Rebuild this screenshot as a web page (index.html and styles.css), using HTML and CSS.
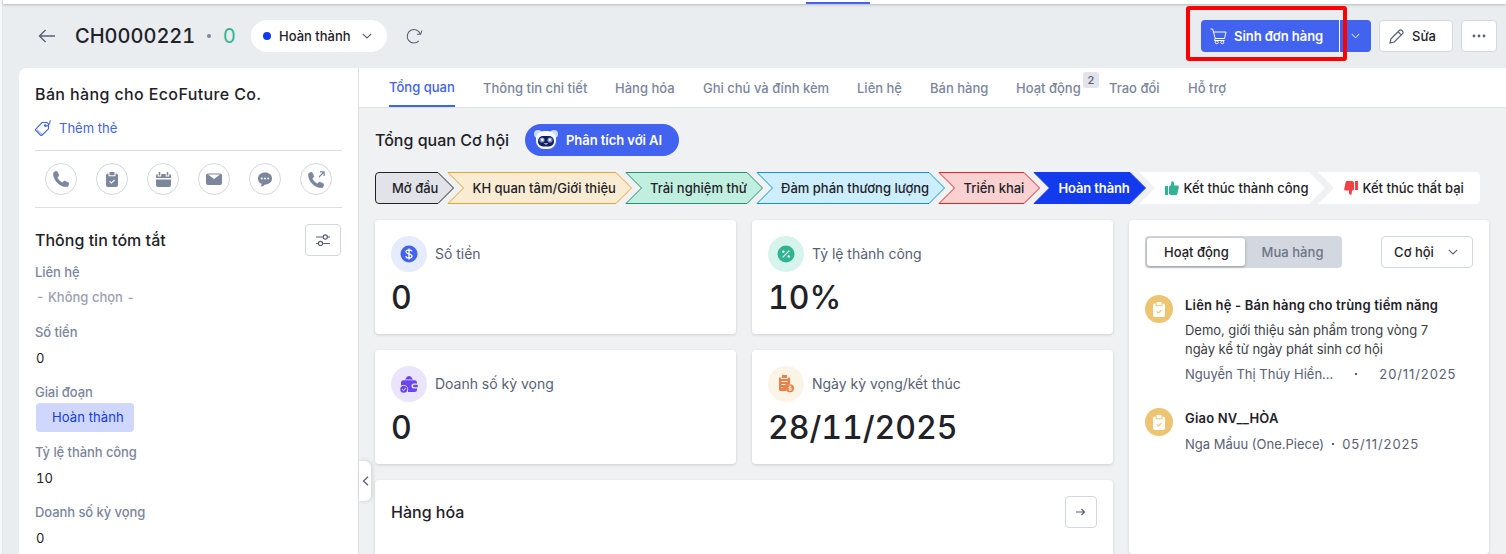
FILE: index.html
```html
<!DOCTYPE html>
<html lang="vi">
<head>
<meta charset="utf-8">
<title>CH0000221</title>
<link rel="stylesheet" href="styles.css">
</head>
<body>
<svg class="defs" aria-hidden="true">
  <symbol id="chev" viewBox="0 0 10 6"><path d="M.8.8 5 5 9.2.8" fill="none" stroke="currentColor" stroke-width="1.1"/></symbol>
  <symbol id="phone" viewBox="0 0 16 16"><path d="M1.2 1.2 3 .3c.6-.2 1.200 0 1.400.6l1.300 3c.2.5.1 1-.3 1.400L4.200 6.400c.8 2.200 3.200 4.600 5.400 5.400l1.100-1.300c.4-.4.900-.5 1.400-.3l3 1.300c.6.2.8.8.7 1.300l-.8 2.200c-.2.5-.6.8-1.100.8C6.700 15.800.4 9.500.4 2.300c0-.5.3-.9.8-1.100z" fill="currentColor" stroke="currentColor" stroke-width=".6"/></symbol>
  <symbol id="clip" viewBox="0 0 12 15"><path d="M2 1.500h.5v2.700h7V1.500h.5a2 2 0 0 1 2 2V13a2 2 0 0 1-2 2H2a2 2 0 0 1-2-2V3.500a2 2 0 0 1 2-2zM3.500 0h5v3.200h-5z" fill="currentColor"/><path class="tick" d="m3.600 9.300 1.800 1.700 3.200-3.200" fill="none" stroke-width="1.100"/></symbol>
</svg>
<div class="app">
  <div class="topbar"><span class="topbar-active"></span></div>
  <header class="head">
    <svg class="back" width="18" height="14" viewBox="0 0 18 14"><path d="M17 7H1.500M7.500 1l-6 6 6 6" fill="none" stroke="#586074" stroke-width="1.400"/></svg>
    <h1 class="code">CH0000221</h1>
    <i class="sep"></i>
    <span class="zero">0</span>
    <div class="status"><i class="status-dot"></i><span>Hoàn thành</span><svg width="10" height="6"><use href="#chev"/></svg></div>
    <svg class="reload" width="17" height="16" viewBox="0 0 17 16"><path d="M12.800 12.900A6.700 6.700 0 1 1 14.300 6.200M10.900 6.200h3.700l1.300-3.600" fill="none" stroke="#586074" stroke-width="1.100"/></svg>
    <div class="actions">
      <div class="split">
        <div class="split-main"><svg width="17" height="17" viewBox="0 0 17 17" fill="none" stroke="#fff"><path d="M.5 1h2.200l2.500 9.500h9.300L16 4H3.600M5.200 10.500 4.500 12.500h10"/><circle cx="6.700" cy="14.300" r="1.500"/><circle cx="12.300" cy="14.300" r="1.500"/></svg><span>Sinh đơn hàng</span></div>
        <div class="split-more"><svg width="9" height="6"><use href="#chev"/></svg></div>
        <span class="callout"></span>
      </div>
      <div class="btn edit"><svg width="15" height="15" viewBox="0 0 15 15" fill="none" stroke="#586074" stroke-width="1.200"><path d="M1 14l1-4.300 8.300-8.200a1.800 1.800 0 0 1 2.600 0l.6.6a1.800 1.800 0 0 1 0 2.600L5.300 13z M9.300 3l2.900 2.900"/></svg><span>Sửa</span></div>
      <div class="btn dots"><svg width="14" height="4" fill="#586074"><circle cx="2" cy="2" r="1.400"/><circle cx="7" cy="2" r="1.400"/><circle cx="12" cy="2" r="1.400"/></svg></div>
    </div>
  </header>
  <div class="main">
    <aside class="side">
      <h2 class="deal">Bán hàng cho EcoFuture Co.</h2>
      <div class="tagline"><svg width="16" height="16" viewBox="0 0 16 16" fill="none" stroke="#4262f0" stroke-width="1.100"><path d="M7 2.500h5l1.500 1.400v4.900L7.200 15c-.6.500-1.200.500-1.800 0L1 10.700c-.6-.6-.6-1.200 0-1.800zM10.200 5.700c2.300 1 5-.7 5-5.500"/><path d="M2 9.700l5 4.600" stroke-width=".7"/><circle cx="10.300" cy="5.600" r=".8"/></svg><span>Thêm thẻ</span></div>
      <div class="quick">
        <span><svg width="16" height="16"><use href="#phone"/></svg></span>
        <span><svg width="12" height="15"><use href="#clip"/></svg></span>
        <span><svg width="15" height="15" viewBox="0 0 15 15" fill="currentColor"><path d="M2.700 0h1.600v3.500H2.700zM10.700 0h1.600v3.500h-1.600zM0 6V4a2 2 0 0 1 1.700-2v2.500h3.600V2h4.400v2.500h3.600V2A2 2 0 0 1 15 4v2zM0 7.500h15V13a2 2 0 0 1-2 2H2a2 2 0 0 1-2-2z"/></svg></span>
        <span><svg width="16" height="12" viewBox="0 0 16 12"><rect y=".5" width="16" height="11.500" rx="2" fill="currentColor"/><path d="M2 1.500h12L8 6z" fill="#fff"/></svg></span>
        <span><svg width="14" height="15" viewBox="0 0 14 15"><path d="M7 .5c4 0 7 2.500 7 6s-3 6-7 6c-.7 1-2.200 2-4.500 2 .9-.7 1.100-1.700 1-2.700C1.300 10.800 0 8.900 0 6.500c0-3.500 3-6 7-6z" fill="currentColor"/><g fill="#fff"><circle cx="3.800" cy="6.500" r="1"/><circle cx="7" cy="6.500" r="1"/><circle cx="10.200" cy="6.500" r="1"/></g></svg></span>
        <span><svg width="17" height="17" viewBox="0 0 17 17"><use href="#phone" x="0" y="1" width="16" height="16"/><path d="M11 6l5-5M12 .9h4.100V5" fill="none" stroke="currentColor" stroke-width="1.200"/></svg></span>
      </div>
      <div class="sumhead"><h3>Thông tin tóm tắt</h3><div class="btn filter"><svg width="14" height="12" viewBox="0 0 14 12" fill="none" stroke="#586074" stroke-width="1.200"><path d="M0 3h7M11.500 3H14M0 9.500h2.300M6.800 9.500H14"/><circle cx="9.300" cy="3" r="2.100"/><circle cx="4.500" cy="9.500" r="2.100"/></svg></div></div>
      <dl class="facts">
        <dt>Liên hệ</dt><dd class="none">- Không chọn -</dd>
        <dt>Số tiền</dt><dd>0</dd>
        <dt>Giai đoạn</dt><dd class="withtag"><span class="stage-tag">Hoàn thành</span></dd>
        <dt>Tỷ lệ thành công</dt><dd>10</dd>
        <dt>Doanh số kỳ vọng</dt><dd>0</dd>
      </dl>
    </aside>
    <section class="content">
      <nav class="tabs">
        <span class="on">Tổng quan</span><span>Thông tin chi tiết</span><span>Hàng hóa</span><span>Ghi chú và đính kèm</span><span>Liên hệ</span><span>Bán hàng</span><span class="hasbadge">Hoạt động<b class="badge">2</b></span><span>Trao đổi</span><span>Hỗ trợ</span>
      </nav>
      <div class="body">
        <div class="collapse"><svg width="7" height="10" viewBox="0 0 7 10"><path d="M6 .7 1.500 5 6 9.300" fill="none" stroke="#586074" stroke-width="1.300"/></svg></div>
        <div class="titlebar"><h2>Tổng quan Cơ hội</h2>
          <div class="ai"><svg width="24" height="20" viewBox="0 0 24 20"><circle cx="4" cy="4" r="4" fill="#c9dbff"/><circle cx="20" cy="4" r="4" fill="#c9dbff"/><rect x="2" y="1" width="20" height="18" rx="8" fill="#f5f9ff"/><rect x="4" y="6" width="16" height="10.500" rx="5" fill="#102066"/><circle cx="8" cy="10" r="2.600" fill="#7f91c8"/><circle cx="16" cy="10" r="2.600" fill="#7f91c8"/><circle cx="8.300" cy="9.800" r="1.300" fill="#fff"/><circle cx="15.700" cy="9.800" r="1.300" fill="#fff"/><path d="M10.500 13.500q1.500 1.200 3 0" stroke="#fff" fill="none"/></svg><span>Phân tích với AI</span></div>
        </div>
        <div class="stages">
          <div class="stage s1"><svg viewBox="0 0 79 32"><path d="M4 .5H63L78.500 16 63 31.500H4A3.500 3.500 0 0 1 .5 28V4A3.500 3.500 0 0 1 4 .5z"/></svg><span>Mở đầu</span></div>
          <div class="stage s2"><svg viewBox="0 0 185 32"><path d="M1 .5H169L184.500 16 169 31.500H1L16.500 16z"/></svg><span>KH quan tâm/Giới thiệu</span></div>
          <div class="stage s3"><svg viewBox="0 0 138 32"><path d="M1 .5H122L137.500 16 122 31.500H1L16.500 16z"/></svg><span>Trải nghiệm thử</span></div>
          <div class="stage s4"><svg viewBox="0 0 189 32"><path d="M1 .5H173L188.500 16 173 31.500H1L16.500 16z"/></svg><span>Đàm phán thương lượng</span></div>
          <div class="stage s5"><svg viewBox="0 0 102 32"><path d="M1 .5H86L101.500 16 86 31.500H1L16.500 16z"/></svg><span>Triển khai</span></div>
          <div class="stage s6"><svg viewBox="0 0 113 32"><path d="M1 .5H97L112.500 16 97 31.500H1L16.500 16z"/></svg><span>Hoàn thành</span></div>
          <div class="stage s7"><svg viewBox="0 0 186 32"><path d="M0 0H170L186 16 170 32H0L16 16z"/></svg><svg class="thumb up" viewBox="0 0 14 14"><path d="M0 5h3v9H0zM4 5.500 6 4l.5-3.500C7.500-.3 9 .5 9 2v2.500h3.500c1 0 1.500.8 1.300 1.600l-1.400 6.600c-.2.800-.7 1.300-1.500 1.300H6l-2-1z"/></svg><span>Kết thúc thành công</span></div>
          <div class="stage s8"><svg viewBox="0 0 162 32"><path d="M0 0H158a4 4 0 0 1 4 4V28a4 4 0 0 1-4 4H0L16 16z"/></svg><svg class="thumb down" viewBox="0 0 14 14"><path transform="rotate(180 7 7)" d="M0 5h3v9H0zM4 5.500 6 4l.5-3.500C7.500-.3 9 .5 9 2v2.500h3.500c1 0 1.500.8 1.300 1.600l-1.400 6.600c-.2.800-.7 1.300-1.500 1.300H6l-2-1z"/></svg><span>Kết thúc thất bại</span></div>
        </div>
        <div class="panels">
          <div class="cards">
            <div class="card"><div class="ct"><span class="ic blue"><svg width="18" height="18" viewBox="0 0 18 18"><circle cx="9" cy="9" r="8.500" fill="#4262f0"/><path d="M12 6.400C11.600 5.200 10.500 4.800 9 4.800c-1.800 0-3 .7-3 2C6 9.500 12 8.200 12 11.100c0 1.400-1.300 2.100-3 2.100s-2.900-.7-3.200-2M9 3.500v11" fill="none" stroke="#fff" stroke-width="1.300"/></svg></span><span>Số tiền</span></div><div class="num">0</div></div>
            <div class="card"><div class="ct"><span class="ic green"><svg width="18" height="18" viewBox="0 0 18 18"><circle cx="9" cy="9" r="8.500" fill="#2eb491"/><path d="M12.300 5.700l-6.600 6.600" stroke="#fff" stroke-width="1.200"/><circle cx="6.300" cy="6.600" r="1.200" fill="#fff"/><circle cx="11.700" cy="11.400" r="1.200" fill="#fff"/></svg></span><span>Tỷ lệ thành công</span></div><div class="num">10%</div></div>
            <div class="card"><div class="ct"><span class="ic violet"><svg width="18" height="18" viewBox="0 0 18 18"><path d="M5 4.500 7 1.700Q9 .2 11 1.700l2 2.800z" fill="#6b45ee"/><path d="M3.500 5.200h11A2.500 2.500 0 0 1 17 7.500v7a2.500 2.500 0 0 1-2.500 2.500H8V14L4 10.500H1v-3a2.500 2.500 0 0 1 2.500-2.300z" fill="#6b45ee"/><rect x="11.500" y="8.500" width="7" height="5" rx="2.500" fill="#eae5fd"/><rect x="13" y="9.700" width="5" height="2.600" rx="1.300" fill="#6b45ee"/><circle cx="3.800" cy="14.200" r="4.300" fill="#eae5fd"/><circle cx="3.800" cy="14.200" r="3.500" fill="#6b45ee"/><path d="m2.200 14.200 1.300 1.300 2.200-2.300" stroke="#fff" fill="none"/></svg></span><span>Doanh số kỳ vọng</span></div><div class="num">0</div></div>
            <div class="card"><div class="ct"><span class="ic orange"><svg width="18" height="18" viewBox="0 0 18 18"><path d="M2 2.500h2V4h7V2.500h2V9c-3 .5-4.500 3-3.500 7H3.500A1.500 1.500 0 0 1 2 14.500zM5 0h5v3H5z" fill="#ed8044"/><path d="M4.500 6.500h6M4.500 9.500h4M4.500 12.500h1" stroke="#fff" stroke-width="1.200"/><circle cx="13" cy="13.300" r="4" fill="#ed8044"/><path d="M14.500 12c-.6-.9-2.800-.7-2.800.3 0 1.200 2.900.6 2.900 1.900 0 1-2.400 1.200-3 .2M13 10.500v5.500" stroke="#fff" stroke-width=".8" fill="none"/></svg></span><span>Ngày kỳ vọng/kết thúc</span></div><div class="num">28/11/2025</div></div>
            <div class="card goods"><h3>Hàng hóa</h3><div class="btn go"><svg width="10" height="8" viewBox="0 0 10 8"><path d="M0 4h8.500M5.500 1l3 3-3 3" fill="none" stroke="#586074" stroke-width="1.200"/></svg></div></div>
          </div>
          <div class="activity">
            <div class="acthead"><div class="toggle"><span class="sel">Hoạt động</span><span>Mua hàng</span></div><div class="btn pick"><span>Cơ hội</span><svg width="10" height="6"><use href="#chev"/></svg></div></div>
            <div class="act"><span class="aic"><svg width="12" height="15"><use href="#clip"/></svg></span><div><h4>Liên hệ - Bán hàng cho trùng tiềm năng</h4><p>Demo, giới thiệu sản phẩm trong vòng 7<br>ngày kể từ ngày phát sinh cơ hội</p><div class="meta wide"><span>Nguyễn Thị Thúy Hiền...</span><i></i><span class="date">20/11/2025</span></div></div></div>
            <div class="act second"><span class="aic"><svg width="12" height="15"><use href="#clip"/></svg></span><div><h4>Giao NV__HÒA</h4><div class="meta"><span>Nga Mẩuu (One.Piece)</span><i></i><span class="date">05/11/2025</span></div></div></div>
          </div>
        </div>
      </div>
    </section>
  </div>
</div>
</body>
</html>
```
FILE: styles.css
```css
* { box-sizing: border-box; }
body { margin: 0; width: 1506px; height: 554px; overflow: hidden; background: #f7f8f9; font: 13px/20px Inter, sans-serif; color: #1f2229; }
h1, h2, h3, h4, p, dl, dd { margin: 0; font-weight: 500; }
svg { display: block; flex: none; }
.defs { position: absolute; width: 0; height: 0; }
.app { margin-left: 2px; border-left: 1px solid #dfe2e6; height: 554px; background: #e9edf0; display: flex; flex-direction: column; }
.topbar { height: 4px; flex: none; background: #fff; box-shadow: 0 1px 3px rgba(0,0,0,.22); padding: 2px 0 0 803px; }
.topbar-active { display: block; width: 64px; height: 2px; background: #4262f0; }
.head { height: 64px; flex: none; display: flex; align-items: center; padding: 0 9px 0 35px; }
.code { font-size: 20px; letter-spacing: 0; margin-left: 19px; width: 132px; font-variant-numeric: tabular-nums; }
.sep { width: 4px; height: 4px; border-radius: 50%; background: #7c869c; }
.zero { color: #2eb491; font-size: 20px; width: 27px; margin-left: 12px; margin-right: 1px; }
.status { width: 136px; height: 32px; border-radius: 16px; background: #fff; display: flex; align-items: center; padding: 0 15px 0 12px; font-weight: 500; color: #1f2229; }
.status-dot { width: 8px; height: 8px; border-radius: 50%; background: #133aec; margin-right: 8px; }
.status svg { margin-left: auto; color: #586074; }
.reload { margin-left: 19px; }
.actions { margin-left: auto; display: flex; gap: 8px; }
.btn { border: 1px solid #d3d7df; border-radius: 4px; background: #fff; display: flex; align-items: center; justify-content: center; height: 32px; font-weight: 500; color: #1f2229; }
.split { position: relative; display: flex; width: 170px; height: 32px; background: #4262f0; border-radius: 4px; color: #fff; font-weight: 600; letter-spacing: -.05px; }
.split-main { width: 139px; border-right: 1px solid #fff; display: flex; align-items: center; padding-left: 9px; gap: 7px; }
.split-more { flex: 1; display: flex; align-items: center; justify-content: center; }
.callout { position: absolute; left: -15px; top: -14px; width: 161px; height: 55px; border: 4px solid #fe0000; border-radius: 3px; }
.edit { width: 74px; gap: 8px; padding-right: 7px; }
.dots { width: 36px; }
.main { display: flex; flex: 1; padding-left: 16px; min-height: 0; }
.side { width: 340px; flex: none; background: #fff; border-right: 1px solid #dfe1e6; border-radius: 8px 0 0 0; padding: 16px 16px 0; overflow: hidden; }
.deal { font-size: 16px; letter-spacing: .38px; white-space: nowrap; }
.tagline { display: flex; gap: 8px; align-items: center; height: 20px; margin-top: 14px; color: #4262f0; }
.quick { margin-top: 12px; border-top: 1px solid #dcdee2; border-bottom: 1px solid #dcdee2; height: 58px; padding: 12px 10px; display: flex; justify-content: space-between; color: #7c869c; }
.quick span { width: 32px; height: 32px; border: 1px solid #d3d7df; border-radius: 50%; display: flex; align-items: center; justify-content: center; }
.tick { stroke: var(--tick, #fff); }
.sumhead { display: flex; justify-content: space-between; align-items: center; margin: 16px 1px 4px 0; }
.sumhead h3 { font-size: 16px; letter-spacing: .02px; }
.filter { width: 36px; height: 32px; }
.facts { line-height: 24px; }
.facts dt { height: 24px; color: #7c869c; letter-spacing: -.07px; }
.facts dd { height: 36px; padding: 2px 0 0 1px; font-weight: 400; font-variant-numeric: tabular-nums; }
.facts .none { color: #9aa1b1; font-weight: 500; padding-top: 1px; }
.facts .withtag { padding-top: 0; }
.stage-tag { position: relative; top: -1px; display: block; width: 98px; height: 29px; line-height: 29px; border-radius: 4px; background: #cfd8fc; color: #133aec; padding-left: 16px; letter-spacing: .12px; }
.content { flex: 1; display: flex; flex-direction: column; min-width: 0; }
.tabs { height: 40px; flex: none; background: #fff; border-bottom: 1px solid #dfe1e6; padding-left: 30px; display: grid; grid-template-columns: 66px 104px 60px 126px 45px 58px 65px 51px 38px; gap: 28px; color: #7c869c; font-weight: 500; line-height: 41px; white-space: nowrap; }
.tabs .on { color: #4262f0; border-bottom: 2px solid #4262f0; height: 39px; line-height: 39px; }
.hasbadge { position: relative; }
.badge { position: absolute; left: 67px; top: 4px; width: 16px; height: 16px; line-height: 16px; border-radius: 3px; background: #e2e4e9; color: #586074; text-align: center; font-size: 11px; font-weight: 500; }
.body { position: relative; flex: 1; background: #f0f1f3; padding: 16px 17px 0 16px; }
.collapse { position: absolute; left: 0; top: 353px; width: 12px; height: 40px; background: #fff; border-radius: 0 6px 6px 0; box-shadow: 1px 0 4px rgba(0,0,0,.15); display: flex; align-items: center; justify-content: center; }
.titlebar { display: flex; align-items: center; height: 32px; }
.titlebar h2 { font-size: 16px; width: 150px; white-space: nowrap; }
.ai { width: 154px; height: 32px; border-radius: 16px; background: #4262f0; color: #fff; display: flex; align-items: center; gap: 8px; padding-left: 9px; font-weight: 600; letter-spacing: -.05px; }
.stages { display: flex; margin-top: 16px; }
.stage { position: relative; height: 32px; flex: none; margin-left: -7px; padding-left: 25.5px; line-height: 32px; white-space: nowrap; font-weight: 500; display: flex; align-items: center; }
.stage > svg:first-child { position: absolute; left: 0; top: 0; width: 100%; height: 32px; }
.stage span { position: relative; }
.s1 { width: 79px; margin-left: 0; padding-left: 17px; fill: #e2e3e8; stroke: #1f2229; }
.s2 { width: 185px; fill: #faecd2; stroke: #e5a42b; }
.s3 { width: 138px; padding-left: 25px; fill: #c1efdf; stroke: #26906f; }
.s4 { width: 189px; padding-left: 25px; fill: #cceeff; stroke: #1594d2; }
.s5 { width: 102px; fill: #fad1d1; stroke: #e5201f; }
.s6 { width: 113px; fill: #133aec; stroke: #133aec; color: #fff; font-weight: 600; letter-spacing: -.12px; }
.s7 { width: 186px; fill: #fff; }
.s8 { width: 162px; fill: #fff; }
.thumb { position: relative; width: 14px; height: 14px; margin-right: 5px; }
.up { fill: #2eb491; }
.down { fill: #ee4245; }
.panels { display: flex; gap: 16px; margin-top: 16px; height: 334px; }
.cards { width: 738px; display: grid; grid-template-columns: 361px 361px; grid-template-rows: 114px 114px 90px; gap: 16px; }
.card, .activity { background: #fff; border-radius: 4px; box-shadow: 0 1px 3px rgba(31,34,41,.16); }
.card { padding: 16px; }
.ct { display: flex; align-items: center; gap: 8px; font-size: 14px; color: #586074; letter-spacing: -.02px; }
.ic { width: 36px; height: 36px; border-radius: 50%; display: flex; align-items: center; justify-content: center; }
.blue { background: #e7ebfe; }
.green { background: #d6f4eb; }
.violet { background: #eae5fd; }
.orange { background: #fcf5e7; }
.num { font-size: 32px; font-weight: 500; line-height: 40px; margin-top: 6px; letter-spacing: 0; font-variant-numeric: tabular-nums; }
.goods { grid-column: 1 / 3; display: flex; justify-content: space-between; }
.goods h3 { font-size: 16px; line-height: 32px; }
.go { width: 32px; }
.activity { width: 360px; padding: 16px; }
.acthead { display: flex; justify-content: space-between; }
.toggle { display: flex; width: 197px; height: 32px; padding: 2px 0 2px 2px; background: #d3d7df; border-radius: 4px; color: #6d7588; font-weight: 500; line-height: 28px; }
.toggle span { width: 98px; padding-left: 17px; letter-spacing: .05px; }
.toggle .sel { letter-spacing: 0; background: #fff; border-radius: 3px; color: #1f2229; box-shadow: 0 1px 3px rgba(31,34,41,.35); }
.pick { width: 92px; gap: 14px; padding-right: 2px; }
.pick svg { color: #586074; }
.act { display: flex; gap: 12px; margin-top: 27px; white-space: nowrap; }
.second { margin-top: 24px; }
.aic { --tick: #edc472; width: 28px; height: 28px; border-radius: 50%; background: #edc472; display: flex; align-items: center; justify-content: center; color: #fff; }
.act h4 { font-weight: 600; line-height: 20px; letter-spacing: .19px; }
.act p { font-weight: 400; line-height: 19px; margin-top: 6px; color: #3b3e45; letter-spacing: -.03px; }
.meta { display: flex; align-items: center; color: #586074; line-height: 20px; margin-top: 6px; }
.wide { margin-top: 5px; }
.meta i { width: 2px; height: 2px; background: #586074; margin: 0 8px; }
.wide i { margin: 0 22px; }
.date { letter-spacing: .9px; }
```
